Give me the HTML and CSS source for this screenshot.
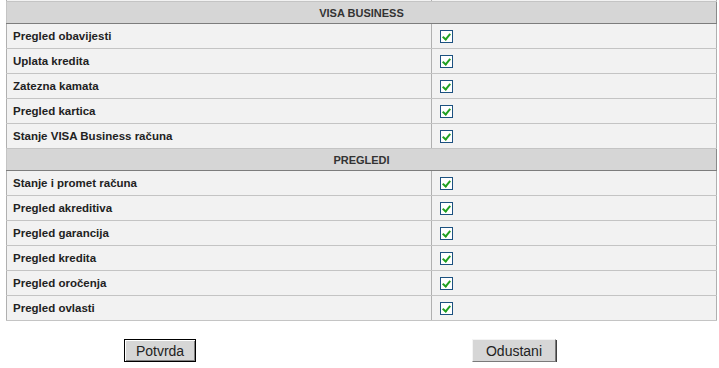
FILE: index.html
```html
<!DOCTYPE html>
<html>
<head>
    <meta charset="UTF-8">
    <title>Ovlasti</title>
    <link rel="stylesheet" href="styles.css">
</head>
<body>
<div id="box">
    <table class="rights">
        <tr class="cut"><td class="name"></td><td class="chk"></td></tr>
        <tr class="group"><th colspan="2">VISA BUSINESS</th></tr>
        <tr><td class="name">Pregled obavijesti</td><td class="chk"><span class="cb"></span></td></tr>
        <tr><td class="name">Uplata kredita</td><td class="chk"><span class="cb"></span></td></tr>
        <tr><td class="name">Zatezna kamata</td><td class="chk"><span class="cb"></span></td></tr>
        <tr><td class="name">Pregled kartica</td><td class="chk"><span class="cb"></span></td></tr>
        <tr><td class="name">Stanje VISA Business računa</td><td class="chk"><span class="cb"></span></td></tr>
        <tr class="group"><th colspan="2">PREGLEDI</th></tr>
        <tr><td class="name">Stanje i promet računa</td><td class="chk"><span class="cb"></span></td></tr>
        <tr><td class="name">Pregled akreditiva</td><td class="chk"><span class="cb"></span></td></tr>
        <tr><td class="name">Pregled garancija</td><td class="chk"><span class="cb"></span></td></tr>
        <tr><td class="name">Pregled kredita</td><td class="chk"><span class="cb"></span></td></tr>
        <tr><td class="name">Pregled oročenja</td><td class="chk"><span class="cb"></span></td></tr>
        <tr><td class="name">Pregled ovlasti</td><td class="chk"><span class="cb"></span></td></tr>
    </table>

    <div class="buttons">
        <button class="btn default">Potvrda</button>
        <button class="btn">Odustani</button>
    </div>
</div>
</body>
</html>
```

FILE: styles.css
```css
body {
    margin: 0;
    background: #fff;
    font-family: "Liberation Sans", Arial, sans-serif;
}

#box {
    padding: 0 3px 0 6px;
}

.rights {
    width: 711px;
    border-collapse: collapse;
    font-size: 11.5px;
    font-weight: bold;
    color: #222;
}

.rights td {
    height: 24px;
    padding: 0 0 0 6px;
    background: #f2f2f2;
    border: 1px solid #c4c4c4;
    border-left-color: #b0b0b0;
    border-right-color: #b0b0b0;
}

.rights td.name {
    width: 418px;
}

.rights td.chk {
    padding-left: 8px;
}

.rights tr.cut td {
    height: 1px;
    border-top: none;
    padding: 0;
}

.rights tr.group th {
    height: 21px;
    padding: 0;
    background: #d6d6d6;
    border: 1px solid #c4c4c4;
    border-bottom: 1px solid #7d7d7d;
    border-right-color: #8a8a8a;
    font-size: 11px;
    color: #333;
    text-align: center;
}

.cb {
    display: block;
    width: 11px;
    height: 11px;
    border: 1px solid #1c5180;
    background: #fff;
    position: relative;
}

.cb::after {
    content: "";
    position: absolute;
    left: 3px;
    top: 1px;
    width: 3px;
    height: 6px;
    border: solid #21a121;
    border-width: 0 2px 2px 0;
    transform: rotate(40deg);
}

.buttons {
    display: flex;
    gap: 276px;
    padding: 18px 0 0 118px;
}

.btn {
    font-family: "Liberation Sans", Arial, sans-serif;
    font-size: 14px;
    color: #222;
    background: #d6d6d6;
    border: 1px solid;
    border-color: #f4f4f4 #7a7a7a #7a7a7a #f4f4f4;
    padding: 0;
    width: 84px;
    height: 23px;
    box-shadow: 1px 1px 0 #404040;
}

.btn.default {
    width: 72px;
    border: 1px solid #000;
    box-shadow: inset 1px 1px 0 #fff, inset -1px -1px 0 #808080;
}
```
